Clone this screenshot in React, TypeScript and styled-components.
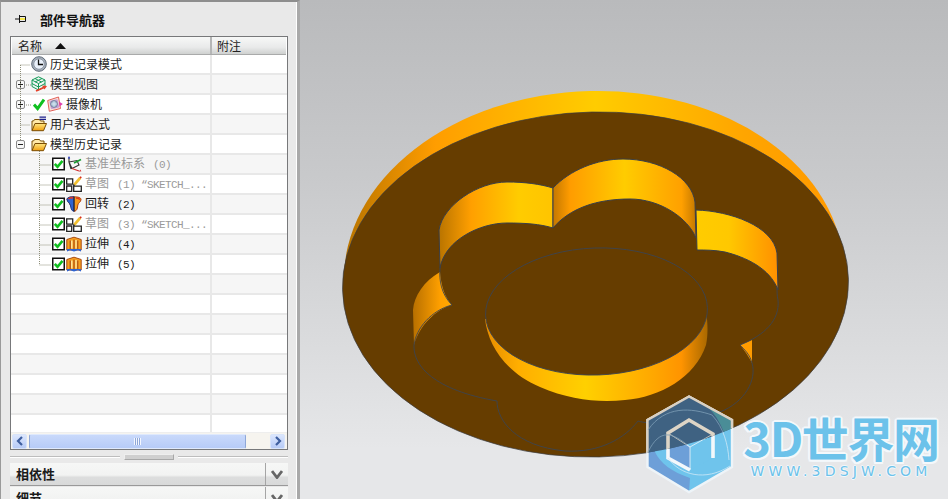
import React from "react";
import styled, { createGlobalStyle } from "styled-components";

const Global = createGlobalStyle`
  html, body { margin: 0; padding: 0; height: 100%; overflow: hidden; background: #e8e8e8; }
  body { font-family: "Noto Sans CJK SC", "Liberation Sans", sans-serif; }
  #root { height: 100%; }
`;

const Page = styled.div`
  display: flex; width: 948px; height: 499px; overflow: hidden;
`;
const Side = styled.aside`
  width: 300px; flex: none; display: flex; flex-direction: column; box-sizing: border-box;
  background: #e9e9e9; border-top: 2px solid #8e8e8e; border-left: 1px solid #9a9a9a;
  border-right: 3px solid #a9a9a9; box-shadow: inset -1px 0 0 #fff; padding: 0 0 0 9px;
`;
const PanelHead = styled.header`
  height: 34px; flex: none; display: flex; align-items: center; gap: 13px; padding-left: 5px;
  font-size: 13px; font-weight: 700; color: #111; letter-spacing: 0;
`;
const Tree = styled.section`
  width: 278px; height: 414px; flex: none; box-sizing: border-box; border: 1px solid #77787a; background: #fff;
  display: flex; flex-direction: column; position: relative;
`;
const Columns = styled.div`
  height: 17px; flex: none; display: grid; grid-template-columns: 200px 1fr; margin: 0 1px 0 1px;
  background: linear-gradient(#f7f8f7, #e9eaea 60%, #cfd1d0);
  border-bottom: 1px solid #a9aaaa; font-size: 12px; line-height: 17px; color: #222;
`;
const ColName = styled.div`
  display: flex; align-items: center; gap: 13px; padding-left: 6px; border-right: 2px solid #b5b6b6; box-sizing: border-box;
`;
const ColNote = styled.div`padding-left: 5px;`;
const Body = styled.div`
  flex: 1; overflow: hidden; position: relative; margin-left: 0;
`;
const Row = styled.div<{ $odd: boolean }>`
  height: 20px; box-sizing: border-box; display: grid; grid-template-columns: 201px 1fr;
  background: ${p => (p.$odd ? "#f6f6f6" : "#fff")}; border-bottom: 2px solid #e8e8e8;
`;
const NameCell = styled.div<{ $indent: number }>`
  display: flex; align-items: center; padding-left: ${p => p.$indent}px; box-sizing: border-box;
  border-right: 2px solid #e8e8e8; white-space: nowrap; overflow: hidden;
`;
const Label = styled.span<{ $muted?: boolean }>`
  font-size: 12px; line-height: 18px; color: ${p => (p.$muted ? "#9a9a9a" : "#1c1c1c")}; margin-left: 3px;
  font-variant-ligatures: none;
`;
const Mono = styled.span`
  font-family: "Liberation Mono", monospace; font-size: 11px; letter-spacing: -.6px; margin-left: 8px;
`;
const ExpanderSlot = styled.span`
  width: 9px; height: 9px; flex: none; margin-right: 6px; display: block;
`;
const Lines = styled.svg`
  position: absolute; left: 0; top: 0; pointer-events: none;
`;
const ScrollBar = styled.div`
  height: 17px; flex: none; display: flex; align-items: center; background: #f6f4ef; padding: 0 2px 0 1px; border-top: 1px solid #eee; box-sizing: border-box;
`;
const ScrollBtn = styled.div`
  width: 15px; height: 15px; flex: none; box-sizing: border-box; border-radius: 2px; border: 1px solid #d8e4fa;
  background: linear-gradient(#dbe6fd, #b7cbf7); display: flex; align-items: center; justify-content: center;
`;
const Thumb = styled.div`
  margin: 0 24px 0 2px; flex: 1; height: 15px; box-sizing: border-box; border-radius: 2px;
  border: 1px solid #dfe9fc; border-left-color: #8ea7d8; border-right-color: #8ea7d8;
  background: linear-gradient(#c9d9fb, #b6cbf7); display: flex; align-items: center; justify-content: center;
`;
const Grip = styled.div`
  width: 7px; height: 7px;
  background: repeating-linear-gradient(90deg, #f4f7ff 0 1px, #8ea7d8 1px 2px);
`;
const Splitter = styled.div`
  height: 13px; flex: none; width: 278px; display: flex; align-items: center; gap: 4px;
`;
const SplitLine = styled.div`
  flex: 1; height: 1px; background: #bdbdbd; border-bottom: 1px solid #fff;
`;
const SplitHandle = styled.div`
  width: 50px; height: 6px; box-sizing: border-box; background: #cfcfcf; border: 1px solid #a8a8a8; border-left-color: #eee; border-top-color: #eee;
`;
const Section = styled.div`
  width: 278px; height: 23px; flex: none; box-sizing: border-box; margin-bottom: 1px;
  display: flex; border-bottom: 1px solid #999;
  background: linear-gradient(#f6f7f6, #f2f3f2 55%, #dcdddd 65%, #d8d9d9);
  font-size: 13px; font-weight: 700; color: #1a1a1a;
`;
const SectionTitle = styled.div`
  flex: 1; padding-left: 6px; line-height: 21px;
`;
const SectionBtn = styled.div`
  width: 22px; flex: none; border-left: 1px solid #a5a5a5; display: flex; align-items: center; justify-content: center;
`;
const Main = styled.main`
  flex: 1; position: relative; overflow: hidden; background: linear-gradient(#b9babc, #c8c9cb 35%, #e6e7e9 90%);
`;
const Scene = styled.svg`
  display: block;
`;
const Watermark = styled.div`
  position: absolute; left: 441px; top: 409px; width: 200px; display: flex; flex-direction: column; align-items: center;
  color: #6cc2ea;
`;
const BrandBig = styled.div`
  font-size: 47px; line-height: 56px; height: 56px; font-weight: 700; white-space: nowrap; letter-spacing: -1.4px;
  font-family: "Noto Sans CJK SC", sans-serif;
  text-shadow: 2px 0 #f4f8fb, -2px 0 #f4f8fb, 0 2px #f4f8fb, 0 -2px #f4f8fb, 1.5px 1.5px #f4f8fb, -1.5px -1.5px #f4f8fb, 1.5px -1.5px #f4f8fb, -1.5px 1.5px #f4f8fb;
`;
const BrandUrl = styled.div`
  font-family: "DejaVu Sans", sans-serif; font-size: 14px; line-height: 13px; height: 13px; font-weight: 400; letter-spacing: 4.2px; white-space: nowrap;
  text-shadow: 1px 0 #f4f8fb, -1px 0 #f4f8fb, 0 1px #f4f8fb, 0 -1px #f4f8fb;
`;

const Expander = ({ open }: { open?: boolean }) => (
  <ExpanderSlot>
    <svg width="9" height="9" viewBox="0 0 9 9" style={{ display: "block" }}>
      <rect x=".5" y=".5" width="8" height="8" rx="1.5" fill="#f7f7f7" stroke="#8b8b8b" />
      <path d={open ? "M2 4.5h5" : "M2 4.5h5M4.5 2v5"} stroke="#222" />
    </svg>
  </ExpanderSlot>
);

const Ic = styled.svg<{ $w?: number }>`
  width: ${p => p.$w ?? 16}px; height: 16px; flex: none; display: block;
`;
const Gap = styled.span<{ $w: number }>`
  width: ${p => p.$w}px; flex: none;
`;

const Clock = () => (
  <Ic viewBox="0 0 16 16">
    <circle cx="8" cy="8" r="7.3" fill="#a9b2bd" stroke="#5f6a78" />
    <circle cx="8" cy="8" r="5.3" fill="#e9f0fa" stroke="#8b95a3" />
    <path d="M7.5 3.5V8.5H12" stroke="#111" strokeWidth="1.3" fill="none" />
  </Ic>
);
const CubeIc = () => (
  <Ic viewBox="0 0 16 16">
    <path d="M7.5 .8 14 4v6.5L7.5 14 1 10.5V4zM1 4l6.5 3.5L14 4M7.5 7.5V14M4 2.5l6.5 3.5M11 2.5 4 6M1 7.5l6.5 3.5 6.5-3.5" fill="#e8f6ee" fillOpacity=".6" stroke="#149a58" />
    <path d="M5 15l8-3.5" stroke="#e8402a" strokeWidth="1.8" />
    <path d="M11 9.5l5 .5-2.5 3.5z" fill="#e8402a" />
  </Ic>
);
const GreenCheck = () => (
  <Ic viewBox="0 0 12 16" $w={12}>
    <path d="M1 8.5l3.6 4L11 3.5" fill="none" stroke="#10c020" strokeWidth="3" />
  </Ic>
);
const Camera = () => (
  <Ic viewBox="0 0 16 16">
    <path d="M.7 4.5 11.5 1l2 11.5L2.3 15.3z" fill="#fbe0d4" stroke="#e0605a" />
    <rect x="3" y="4" width="8.5" height="8.5" rx="1" fill="#c9a0d8" transform="rotate(-12 7 8)" />
    <circle cx="7" cy="8" r="3.4" fill="#a7c2d8" stroke="#7a7f9a" />
    <path d="M12 5.5l3.8 2.5-3.2 2.5z" fill="#e040b0" />
    <path d="M7 5.5v5M4.5 8h5" stroke="#d9e6f0" />
  </Ic>
);
const FolderOpen = ({ lines }: { lines?: boolean }) => (
  <Ic viewBox="0 0 16 16">
    <path d="M1 14.5V5h1.5l1-1.5h5L9.5 5H13v3" fill="#ffe9a8" stroke="#7a5208" />
    <path d="M1 14.7 4 7.5h11.5l-3 7.2z" fill="url(#folderFill)" stroke="#7a4c04" />
    {lines && <path d="M8.5 1.2h6.5M8.5 3.4h6.5" stroke="#1d1f8a" strokeWidth="1.2" />}
  </Ic>
);
const CheckBox = () => (
  <Ic viewBox="0 0 13 16" $w={13}>
    <rect x=".75" y="2.25" width="11.5" height="11.5" fill="#fff" stroke="#111" strokeWidth="1.5" />
    <path d="M2.8 7.8l2.7 3 5-6" fill="none" stroke="#10c020" strokeWidth="2.6" />
  </Ic>
);
const Csys = () => (
  <Ic viewBox="0 0 16 16">
    <path d="M3 6 11 4.5 13 9 6 12.5zM3 6l2 7M3 1.5V6" fill="none" stroke="#333" strokeWidth="1.1" />
    <path d="M6 12.5 13 15" stroke="#d03030" strokeWidth="1.2" />
    <path d="M8 7 15 3.5" stroke="#1a9c30" strokeWidth="1.6" />
    <path d="M3 0l1.2 2.5H1.8z" fill="#1a30c0" />
    <path d="M13 15.8l2.4-.5-1.2-1.8z" fill="#d03030" />
  </Ic>
);
const Sketch = () => (
  <Ic viewBox="0 0 16 16">
    <path d="M.7 2.8h6v5.4h-6zM.7 10h5v5.3h-5zM7.7 10.2h7.6v5.1H7.7z" fill="#fff" stroke="#222" strokeWidth="1.3" />
    <path d="M8.2 8.8l6-7" stroke="#f2c030" strokeWidth="2.8" />
    <path d="M13.4 1.3l1.3-1.1 1.1 1.1-1.1 1.4z" fill="#d83020" />
    <path d="M6.8 10.4l.6-2.6 2 1.7z" fill="#333" />
  </Ic>
);
const Revolve = () => (
  <Ic viewBox="0 0 16 16">
    <path d="M1 3.5C1 1.5 4 .8 8 .8s7 .7 7 2.7c0 2.5-2.8 3.2-3.2 5.5-.3 2.5-.4 6-3.8 6.3z" fill="#f59a1a" stroke="#b04010" />
    <path d="M1 3.5C1 1.5 4 .8 8 .8v14.5C5 15 5 11.5 4.3 9 3.8 6.8 1 6 1 3.5z" fill="#2e64d0" stroke="#1d3a90" />
    <path d="M2.5 3C4 1.8 6 1.6 7.5 2M10 2c1.5 0 3 .5 4 1.5" stroke="#e03020" strokeWidth="1.6" fill="none" />
    <path d="M8 .8v14.5" stroke="#222" />
  </Ic>
);
const Extrude = () => (
  <Ic viewBox="0 0 16 16">
    <path d="M.8 3.5 8 1.2l7.2 2.3V14H.8z" fill="#f7a020" stroke="#a84a10" />
    <path d="M4.2 4.5 4.2 13M8 3.5V13M11.8 4.5V13" stroke="#a84a10" strokeWidth="1.1" />
    <path d="M5.8 4.5V12.5M10 4V12.5" stroke="#ffe9a0" strokeWidth="1.4" />
    <path d="M1 13h14v2.5l-3-1.2-4 1.2-4-1.2-3 1.2z" fill="#2e64d0" />
  </Ic>
);

const check = [<CheckBox key="a" />, <Gap key="g" $w={1} />];
const rows: { indent: number; exp?: "p" | "m"; icons: React.ReactNode[]; label: string; mono?: string; muted?: boolean }[] = [
  { indent: 20, icons: [<Clock key="a" />], label: "历史记录模式" },
  { indent: 5, exp: "p", icons: [<CubeIc key="a" />], label: "模型视图" },
  { indent: 5, exp: "p", icons: [<Gap key="g" $w={2} />, <GreenCheck key="a" />, <Gap key="h" $w={2} />, <Camera key="b" />], label: "摄像机" },
  { indent: 20, icons: [<FolderOpen key="a" lines />], label: "用户表达式" },
  { indent: 5, exp: "m", icons: [<FolderOpen key="a" />], label: "模型历史记录" },
  { indent: 41, icons: [...check, <Csys key="b" />], label: "基准坐标系", mono: "(0)", muted: true },
  { indent: 41, icons: [...check, <Sketch key="b" />], label: "草图", mono: "(1) “SKETCH_...", muted: true },
  { indent: 41, icons: [...check, <Revolve key="b" />], label: "回转", mono: "(2)" },
  { indent: 41, icons: [...check, <Sketch key="b" />], label: "草图", mono: "(3) “SKETCH_...", muted: true },
  { indent: 41, icons: [...check, <Extrude key="b" />], label: "拉伸", mono: "(4)" },
  { indent: 41, icons: [...check, <Extrude key="b" />], label: "拉伸", mono: "(5)" },
];

const Chevron = () => (
  <svg width="12" height="9" viewBox="0 0 12 9">
    <path d="M1 1 6 7.5 11 1" fill="none" stroke="#666" strokeWidth="2.8" />
  </svg>
);

const Pin = () => (
  <svg width="12" height="10" viewBox="0 0 12 10">
    <path d="M0 5h4M4.5 1v8M4.5 2.5h6v5h-6" fill="none" stroke="#111" />
    <path d="M5 4h5v2H5z" fill="#f6e84a" />
  </svg>
);

const brown = "#663d00";
const ELL = { cx: 595.5, cy: 284.5, rx: 253, ry: 172.5, rot: "rotate(-1.2 595.5 284.5)" };

const HexMark = ({ dark }: { dark: boolean }) => {
  const left = dark ? "#3f6282" : "#6d9fd8";
  const right = dark ? "#3f6282" : "#6fc4ec";
  const teal = dark ? "#4a8d97" : "#6fc4ec";
  const edge = dark ? "#d9d0c2" : "#eef4f8";
  const inner = dark ? "#ddd5c6" : "#f4f8fb";
  return (
    <g>
      <path d="M689 396.5 732 420V467L689 492 647.5 467V420Z" fill={right} />
      <path d="M647.5 420V467L689 492 690 478C672 472 660 463 655 452Z" fill={left} />
      <path d="M708 407 732 420V456C726 438 722 421 708 407Z" fill={teal} />
      <path d="M668 434 690 447V470L668 458Z" fill={dark ? "#3f6282" : "#6d9fd8"} />
      <path d="M690 447 713 434V458L690 470Z" fill={dark ? "#3f6282" : "#6fc4ec"} />
      <path d="M689 396.5 732 420V467L689 492 647.5 467V420Z" fill="none" stroke={edge} strokeWidth="2.4" />
      <path d="M713 458V434L689 420 668 433V458L690 470" fill="none" stroke={inner} strokeWidth="3.6" />
      <path d="M668 433 690 447 713 434M690 447V470" fill="none" stroke={inner} strokeWidth=".8" />
      <path d="M648 430C665 405 692 408 712 415 724 428 728 445 729 460M648 452C660 428 672 432 690 447M668 458C680 475 705 482 730 466" fill="none" stroke={dark ? "#7fa0b8" : "#cfe8f6"} strokeWidth=".8" />
    </g>
  );
};

export default function App() {
  return (
    <Page>
      <Global />
      <svg width="0" height="0" style={{ position: "absolute" }}>
        <defs>
          <linearGradient id="folderFill" x1="0" y1="0" x2="0" y2="1">
            <stop offset="0" stopColor="#ffe680" />
            <stop offset="1" stopColor="#f0a010" />
          </linearGradient>
        </defs>
      </svg>
      <Side>
        <PanelHead><Pin />部件导航器</PanelHead>
        <Tree>
          <Columns>
            <ColName>名称
              <svg width="11" height="6" viewBox="0 0 11 6"><path d="M0 6 5.5 0 11 6z" fill="#111" /></svg>
            </ColName>
            <ColNote>附注</ColNote>
          </Columns>
          <Body>
            {Array.from({ length: 19 }).map((_, i) => {
              const r = rows[i];
              return (
                <Row key={i} $odd={i % 2 === 1}>
                  <NameCell $indent={r ? r.indent : 0}>
                    {r?.exp && <Expander open={r.exp === "m"} />}
                    {r?.icons}
                    {r && <Label $muted={r.muted}>{r.label}{r.mono && <Mono>{r.mono}</Mono>}</Label>}
                  </NameCell>
                  <div />
                </Row>
              );
            })}
            <Lines width="60" height="240" viewBox="0 0 60 240">
              <path d="M9.5 10V85M9.5 10H19.5M15 30H20M15 50H20M9.5 70H19.5M28.5 96V210M28.5 110H40M28.5 130H40M28.5 150H40M28.5 170H40M28.5 190H40M28.5 210H40" stroke="#8f8f7a" strokeDasharray="1 1" fill="none" />
            </Lines>
          </Body>
          <ScrollBar>
            <ScrollBtn><svg width="8" height="10" viewBox="0 0 8 10"><path d="M6 1 2 5l4 4" fill="none" stroke="#3f5f9f" strokeWidth="2.2" /></svg></ScrollBtn>
            <Thumb><Grip /></Thumb>
            <ScrollBtn><svg width="8" height="10" viewBox="0 0 8 10"><path d="M2 1l4 4-4 4" fill="none" stroke="#3f5f9f" strokeWidth="2.2" /></svg></ScrollBtn>
          </ScrollBar>
        </Tree>
        <Splitter><SplitLine /><SplitHandle /><SplitLine /></Splitter>
        <Section><SectionTitle>相依性</SectionTitle><SectionBtn><Chevron /></SectionBtn></Section>
        <Section><SectionTitle>细节</SectionTitle><SectionBtn><Chevron /></SectionBtn></Section>
      </Side>
      <Main>
        <Scene width="648" height="499" viewBox="300 0 648 499">
          <defs>
            <linearGradient id="rim" gradientUnits="userSpaceOnUse" x1="345" x2="845" y1="0" y2="0">
              <stop offset="0" stopColor="#b87400" /><stop offset=".18" stopColor="#ff9d00" />
              <stop offset=".5" stopColor="#ffcc00" /><stop offset=".8" stopColor="#ffa500" /><stop offset="1" stopColor="#ff9800" />
            </linearGradient>
            <linearGradient id="w1" gradientUnits="userSpaceOnUse" x1="439" x2="553" y1="0" y2="0">
              <stop offset="0" stopColor="#b97400" /><stop offset=".28" stopColor="#ff9f00" /><stop offset=".7" stopColor="#ffcc00" /><stop offset="1" stopColor="#ffc400" />
            </linearGradient>
            <linearGradient id="w2" gradientUnits="userSpaceOnUse" x1="553" x2="696" y1="0" y2="0">
              <stop offset="0" stopColor="#c47800" /><stop offset=".12" stopColor="#ff9c00" /><stop offset=".5" stopColor="#ffcc00" /><stop offset=".9" stopColor="#ffa000" /><stop offset="1" stopColor="#c47800" />
            </linearGradient>
            <linearGradient id="w3" gradientUnits="userSpaceOnUse" x1="696" x2="778" y1="0" y2="0">
              <stop offset="0" stopColor="#ffcc00" /><stop offset=".4" stopColor="#ffc800" /><stop offset="1" stopColor="#ff9000" />
            </linearGradient>
            <linearGradient id="w4" gradientUnits="userSpaceOnUse" x1="413" x2="452" y1="0" y2="0">
              <stop offset="0" stopColor="#b87000" /><stop offset=".7" stopColor="#ffa000" /><stop offset="1" stopColor="#ffa800" />
            </linearGradient>
            <linearGradient id="w6" gradientUnits="userSpaceOnUse" x1="485" x2="708" y1="0" y2="0">
              <stop offset="0" stopColor="#e58c00" /><stop offset=".15" stopColor="#ffae00" /><stop offset=".45" stopColor="#ffd000" />
              <stop offset=".75" stopColor="#ffa800" /><stop offset=".88" stopColor="#ff9400" /><stop offset="1" stopColor="#a86800" />
            </linearGradient>
            <clipPath id="topFace">
              <ellipse cx={ELL.cx} cy={ELL.cy} rx={ELL.rx} ry={ELL.ry} transform={ELL.rot} />
            </clipPath>
          </defs>

          <path d="M344 282A250 185 -1.5 0 1 844 270Z" fill="url(#rim)" />
          <ellipse cx={ELL.cx} cy={ELL.cy} rx={ELL.rx} ry={ELL.ry} transform={ELL.rot} fill={brown} stroke="#3a3c40" strokeWidth=".7" />

          <g stroke="#3a3f48" strokeWidth="1">
            <path d="M439 230C443 205 478 182 507 182 525 182 540 184 553 188V228C540 224 525 223 507 223 480 223 445 240 440 268Z" fill="url(#w1)" />
            <path d="M553 188C570 170 597 159 623 159 660 159 692 178 695 202L696 238C688 218 660 199 630 199 597 199 570 208 553 228Z" fill="url(#w2)" />
            <path d="M696 210C730 211 773 226 777 253L778 290C770 268 745 257 725 252 715 250 705 250 697 250Z" fill="url(#w3)" />
            <path d="M440 272C424 281 414 296 413 310L414 345C420 325 435 310 452 305 445 298 441 286 440 272Z" fill="url(#w4)" stroke="none" />
            <path d="M740 345 752 340 752 363C749 357 745 351 740 345Z" fill="#ff9c00" stroke="none" />
            <path d="M485 319C488 345 505 372 540 387 570 400 600 403 625 400 660 397 695 378 706 345 708 335 708 325 706 310Z" fill="url(#w6)" stroke="none" />
          </g>
          <ellipse cx="596.5" cy="311.5" rx="111" ry="63.5" transform="rotate(-2 596.5 311.5)" fill={brown} stroke="#3c4450" strokeWidth=".9" />
          <path d="M440 268C439 280 441 294 452 305 432 310 416 328 414 345 413 366 434 390 497 401 497 420 515 446 565 451 600 453 625 438 638 421 650 425 690 425 720 412 745 402 757 380 752 363 750 355 745 350 740 345 765 335 780 320 778 300 777 296 777 291 777 287" fill="none" stroke="#3c4450" strokeWidth=".9" />

          <HexMark dark={false} />
          <g clipPath="url(#topFace)"><HexMark dark /></g>
        </Scene>
        <Watermark>
          <BrandBig>3D世界网</BrandBig>
          <BrandUrl>WWW.3DSJW.COM</BrandUrl>
        </Watermark>
      </Main>
    </Page>
  );
}
